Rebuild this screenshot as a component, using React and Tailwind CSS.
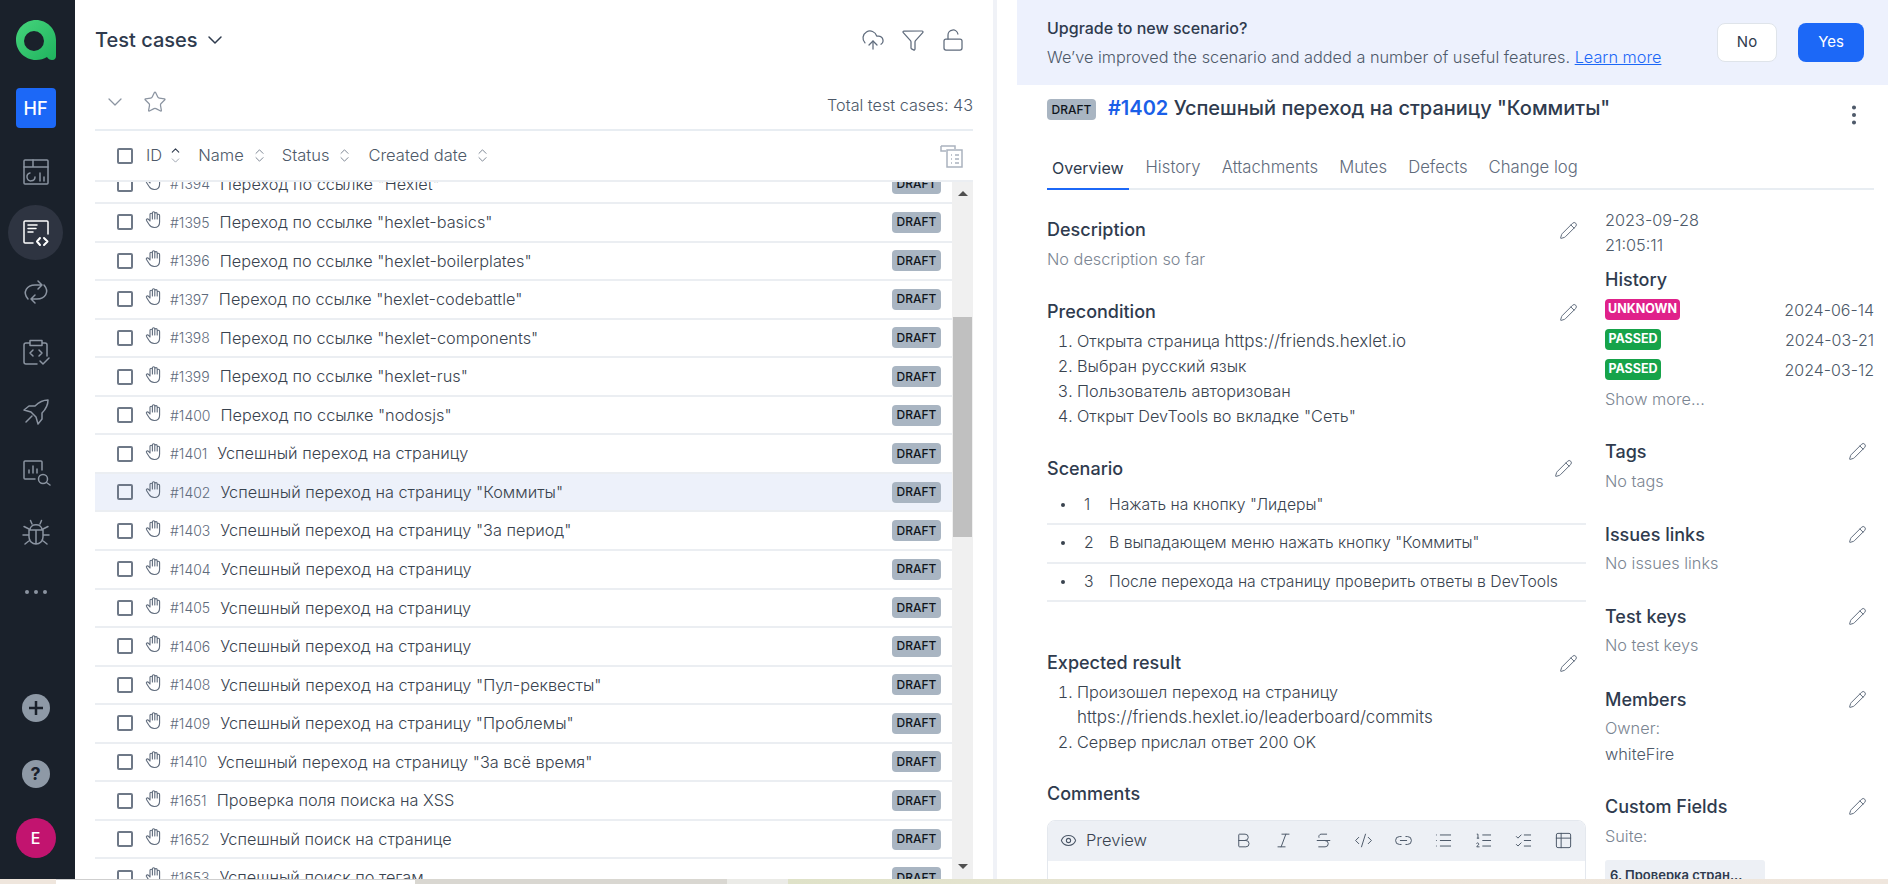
import {
  Bold,
  ChevronDown,
  ChevronsUpDown,
  ChevronUp,
  CloudUpload,
  CodeXml,
  Eye,
  Funnel,
  Italic,
  Link2,
  List,
  ListChecks,
  ListOrdered,
  LockOpen,
  MoreVertical,
  Pencil,
  Star,
  Strikethrough,
  Table2,
} from 'lucide-react';

const rows = [
  ['#1394', 'Переход по ссылке "Hexlet"'],
  ['#1395', 'Переход по ссылке "hexlet-basics"'],
  ['#1396', 'Переход по ссылке "hexlet-boilerplates"'],
  ['#1397', 'Переход по ссылке "hexlet-codebattle"'],
  ['#1398', 'Переход по ссылке "hexlet-components"'],
  ['#1399', 'Переход по ссылке "hexlet-rus"'],
  ['#1400', 'Переход по ссылке "nodosjs"'],
  ['#1401', 'Успешный переход на страницу'],
  ['#1402', 'Успешный переход на страницу "Коммиты"'],
  ['#1403', 'Успешный переход на страницу "За период"'],
  ['#1404', 'Успешный переход на страницу'],
  ['#1405', 'Успешный переход на страницу'],
  ['#1406', 'Успешный переход на страницу'],
  ['#1408', 'Успешный переход на страницу "Пул-реквесты"'],
  ['#1409', 'Успешный переход на страницу "Проблемы"'],
  ['#1410', 'Успешный переход на страницу "За всё время"'],
  ['#1651', 'Проверка поля поиска на XSS'],
  ['#1652', 'Успешный поиск на странице'],
  ['#1653', 'Успешный поиск по тегам'],
];

const navIcons = [
  <g key="a">
    <rect x="1" y="1" width="24" height="24" rx="1" />
    <path d="M1 8h24M10 1v7M7 14a4 4 0 1 0 5 4M17 14v8M21 18v4" />
  </g>,
  <g key="b">
    <path d="M25 15V3a1 1 0 0 0-1-1H2a1 1 0 0 0-1 1v20a1 1 0 0 0 1 1h8" />
    <path d="M5 6h9M5 9.500h8M5 13h5" />
    <path d="M17 19l-3 3.500 3 3.500M21 19l3.500 3.500-3.500 3.500" strokeWidth="2" />
  </g>,
  <path key="c" d="M5 20C-1 13 4 6 12 6h7M15 2l4 4-4 4M21 6c6 7 1 14-7 14H8M12 16l-4 4 4 4" />,
  <path key="d" d="M7 4H3a2 2 0 0 0-2 2v17a2 2 0 0 0 2 2h11M19 4h3a2 2 0 0 1 2 2v11M7 1.500h12v5H7zM10 11l-3 3 3 3M16 11l3 3-3 3M17 22l3 3 6-6" />,
  <path key="e" d="M25 1c-5 0-9 2-13 6H6l-5 4 7 2 5 5 2 7 4-5v-6c4-4 6-8 6-13zM3 23l6-6" />,
  <g key="f">
    <path d="M19 11V3a1 1 0 0 0-1-1H2a1 1 0 0 0-1 1v16a1 1 0 0 0 1 1h10M6 14v-3M10 14V7M14 14v-4" />
    <circle cx="20" cy="20" r="4.500" />
    <path d="M23.500 23.500 27 26" />
  </g>,
  <path key="g" d="M6 11h14v7a7 7 0 0 1-14 0zM13 11v14M7 11c0-7 12-7 12 0M9 5 7.500 1.500M17 5l1.500-3.500M6 10 1 7.500M20 10l5-2.500M6 16H0M20 16h6M7 21l-5 4M19 21l5 4" />,
];

function NavIcon({ children, active }) {
  return (
    <div className="h-[60px] flex items-center justify-center">
      <div className={`w-[55px] h-[55px] rounded-full flex items-center justify-center ${active ? 'bg-[#2e3441]' : ''}`}>
        <svg
          width="26"
          height="26"
          viewBox="0 0 26 26"
          fill="none"
          stroke={active ? '#ffffff' : '#8b94a1'}
          strokeWidth="1.500"
          strokeLinecap="round"
          strokeLinejoin="round"
          className="overflow-visible"
        >
          {children}
        </svg>
      </div>
    </div>
  );
}

function Sidebar() {
  return (
    <aside className="w-[75px] shrink-0 bg-[#1a212b] flex flex-col items-center pt-[20px] pb-[21px] pr-[4px]">
      <svg width="40" height="40" viewBox="0 0 40 40">
        <defs>
          <linearGradient id="logo" x1="0" y1="0" x2="1" y2="1">
            <stop offset="0" stopColor="#46d47c" />
            <stop offset="1" stopColor="#1fb35e" />
          </linearGradient>
        </defs>
        <path
          fillRule="evenodd"
          d="M20 0C9 0 0 9 0 20s9 20 20 20c4 0 8-1 11-3 1 2 3 3 5 3 3 0 4-2 4-4V20C40 9 31 0 20 0zm-2 11a10 10 0 1 1 0 20 10 10 0 0 1 0-20z"
          fill="url(#logo)"
        />
      </svg>
      <div className="mt-[28px] w-[40px] h-[40px] rounded-[4px] bg-[#1c68f7] text-white text-[18px] font-medium flex items-center justify-center">
        HF
      </div>
      <div className="mt-[14px] w-full">
        {navIcons.map((icon, i) => (
          <NavIcon key={i} active={i === 1}>{icon}</NavIcon>
        ))}
      </div>
      <div className="h-[60px] flex items-center gap-[5px]">
        <span className="w-[4px] h-[4px] rounded-full bg-[#8b94a1]" />
        <span className="w-[4px] h-[4px] rounded-full bg-[#8b94a1]" />
        <span className="w-[4px] h-[4px] rounded-full bg-[#8b94a1]" />
      </div>
      <div className="mt-auto flex flex-col items-center gap-[38px]">
        <div className="w-[28px] h-[28px] rounded-full bg-[#8e99a6] flex items-center justify-center">
          <svg width="18" height="18" viewBox="0 0 18 18" stroke="#1a212b" strokeWidth="2.500">
            <path d="M9 2v14M2 9h14" />
          </svg>
        </div>
        <div className="w-[28px] h-[28px] rounded-full bg-[#8e99a6] flex items-center justify-center text-[#1a212b] text-[18px] leading-none font-bold">
          ?
        </div>
        <div className="-mt-[8px] w-[40px] h-[40px] rounded-full bg-[#c2146f] flex items-center justify-center text-white text-[16px] font-medium">
          E
        </div>
      </div>
    </aside>
  );
}

function DraftBadge() {
  return (
    <span className="w-[49px] h-[21px] shrink-0 rounded-[4px] bg-[#a9b5c2] text-[#10151c] text-[12px] font-medium flex items-center justify-center">
      DRAFT
    </span>
  );
}

function Checkbox() {
  return <span className="w-[16px] h-[16px] shrink-0 border-2 border-[#6e7887] rounded-[2px]" />;
}

function HandIcon() {
  return (
    <svg
      width="17"
      height="18"
      viewBox="0 0 17 18"
      fill="none"
      stroke="#5f6b7c"
      strokeWidth="1.100"
      strokeLinecap="round"
      strokeLinejoin="round"
      className="ml-[12px] shrink-0 -translate-y-[2px]"
    >
      <path d="M5 10V3.500a1.200 1.200 0 0 1 2.400 0V8M7.400 8V2a1.200 1.200 0 0 1 2.400 0v6M9.800 8V2.800a1.200 1.200 0 0 1 2.400 0V8M12.200 8V4.500a1.200 1.200 0 0 1 2.400 0V11c0 3.500-2.300 5.500-5.300 5.500-2.700 0-4-1-5.200-3L1.500 9.500c-.6-1.200 1-2.200 2-1.200L5 10" />
    </svg>
  );
}

function SortLabel({ label, active, className }) {
  return (
    <div className={`flex items-center gap-[7px] ${className}`}>
      <span>{label}</span>
      {active ? (
        <span className="flex flex-col items-center">
          <ChevronUp size={13} strokeWidth={2} className="text-[#2f3b4e] -mb-[3px]" />
          <ChevronDown size={13} strokeWidth={1.5} className="text-[#8b94a1]" />
        </span>
      ) : (
        <ChevronsUpDown size={17} strokeWidth={1.25} className="text-[#6e7887]" />
      )}
    </div>
  );
}

function TestRow({ id, name }) {
  const selected = id === '#1402';
  return (
    <div
      className={`h-[38.550px] shrink-0 flex items-center pl-[22px] pr-[11px] border-b-2 border-[#ebeef2] ${selected ? 'bg-[#edf1fa]' : ''}`}
    >
      <Checkbox />
      <HandIcon />
      <span className="ml-[8px] text-[14px] font-light text-[#5f6b7c]">{id}</span>
      <span className="ml-[10px] text-[16.300px] font-light text-[#39434f] truncate">{name}</span>
      <span className="ml-auto">
        <DraftBadge />
      </span>
    </div>
  );
}

function ListPanel() {
  return (
    <section className="w-[918px] shrink-0 flex flex-col pl-[20px] pr-[20px] overflow-hidden">
      <div className="h-[80px] shrink-0 flex items-center">
        <h1 className="text-[20px] font-medium text-[#2f3b4e]">Test cases</h1>
        <ChevronDown size={24} strokeWidth={1.5} className="ml-[5px] text-[#2f3b4e]" />
        <div className="ml-auto mr-[8px] flex items-center gap-[16px] text-[#5f6b7c]">
          <CloudUpload size={24} strokeWidth={1.25} />
          <Funnel size={24} strokeWidth={1.25} />
          <LockOpen size={24} strokeWidth={1.25} />
        </div>
      </div>
      <div className="h-[51px] shrink-0 flex items-center border-b-2 border-[#e8edf2] pl-[8px] pb-[6px]">
        <ChevronDown size={24} strokeWidth={1.25} className="text-[#8b94a1]" />
        <Star size={24} strokeWidth={1.25} className="ml-[16px] text-[#8b94a1]" />
        <span className="ml-auto mt-[8px] text-[16.200px] font-light text-[#4d5969]">Total test cases: 43</span>
      </div>
      <div className="h-[51px] shrink-0 flex items-center pl-[22px] pr-[9px] border-b-2 border-[#ebeef2] text-[16.500px] font-light text-[#4d5969]">
        <Checkbox />
        <SortLabel label="ID" active className="ml-[13px]" />
        <SortLabel label="Name" className="ml-[16px]" />
        <SortLabel label="Status" className="ml-[14px]" />
        <SortLabel label="Created date" className="ml-[15px]" />
        <svg className="ml-auto" width="24" height="24" viewBox="0 0 24 24" fill="none" stroke="#aab3bf" strokeWidth="1.500">
          <path d="M1 2h14v3M1 2v5h5M7 6h15v17H7V6zM11 11h1M15 11h4M11 15h1M15 15h4M11 19h1M15 19h4" />
        </svg>
      </div>
      <div className="flex-1 min-h-0 flex">
        <div className="flex-1 min-w-0 overflow-hidden">
          <div className="-mt-[16.500px]">
            {rows.map(([id, name]) => (
              <TestRow key={id} id={id} name={name} />
            ))}
          </div>
        </div>
        <div className="w-[21px] shrink-0 bg-[#f0f0f0] flex flex-col items-center relative">
          <span className="mt-[9px] w-0 h-0 border-x-[5px] border-x-transparent border-b-[5px] border-b-[#505050]" />
          <span className="absolute top-[135px] left-[1px] right-[1px] h-[220px] bg-[#c0c0c0]" />
          <span className="mt-auto mb-[10px] w-0 h-0 border-x-[5px] border-x-transparent border-t-[5px] border-t-[#505050]" />
        </div>
      </div>
    </section>
  );
}

function Heading({ children, className = '' }) {
  return <h3 className={`h-[24px] leading-[24px] text-[18px] font-medium text-[#2f3b4e] ${className}`}>{children}</h3>;
}

function EditPencil({ className = '' }) {
  return <Pencil size={19} strokeWidth={1.25} className={`text-[#5f6b7c] ${className}`} />;
}

function SectionHead({ title, className = '', pencil = '' }) {
  return (
    <div className={`flex items-center justify-between ${className}`}>
      <Heading>{title}</Heading>
      <EditPencil className={pencil} />
    </div>
  );
}

function Muted({ children, className = '' }) {
  return <p className={`h-[24px] leading-[22px] text-[16.300px] font-light text-[#7b8592] ${className}`}>{children}</p>;
}

function ScenarioRow({ n, text }) {
  return (
    <div className="h-[38.500px] flex items-center pl-[14px] border-b-2 border-[#ebeef2] text-[15.750px] font-light text-[#39434f]">
      <span className="w-[4px] h-[4px] rounded-full bg-[#39434f]" />
      <span className="ml-[19px] w-[25px]">{n}</span>
      <span>{text}</span>
    </div>
  );
}

function StatusRow({ label, color, width, date }) {
  return (
    <div className="h-[30px] flex items-center justify-between">
      <span
        className={`h-[21px] rounded-[4px] text-white text-[12.500px] font-bold flex items-center justify-center ${color} ${width}`}
      >
        {label}
      </span>
      <span className="text-[16px] font-light text-[#4d5969]">{date}</span>
    </div>
  );
}

function MainColumn() {
  const tools = [Bold, Italic, Strikethrough, CodeXml, Link2, List, ListOrdered, ListChecks, Table2];
  return (
    <div className="w-[539px] shrink-0">
      <SectionHead title="Description" className="mt-[28px]" pencil="mr-[8px]" />
      <Muted className="mt-[6px]">No description so far</Muted>

      <SectionHead title="Precondition" className="mt-[28px]" pencil="mr-[8px]" />
      <ol className="mt-[5px] pl-[30px] list-decimal text-[16.300px] leading-[25px] font-light text-[#39434f]">
        <li>Открыта страница <span className="text-[17px]">https://friends.hexlet.io</span></li>
        <li>Выбран русский язык</li>
        <li>Пользователь авторизован</li>
        <li>Открыт DevTools во вкладке "Сеть"</li>
      </ol>

      <SectionHead title="Scenario" className="mt-[27.500px]" pencil="mr-[13px]" />
      <div className="mt-[6px]">
        <ScenarioRow n="1" text={'Нажать на кнопку "Лидеры"'} />
        <ScenarioRow n="2" text={'В выпадающем меню нажать кнопку "Коммиты"'} />
        <ScenarioRow n="3" text="После перехода на страницу проверить ответы в DevTools" />
      </div>

      <SectionHead title="Expected result" className="mt-[49px]" pencil="mr-[8px]" />
      <ol className="mt-[4.500px] pl-[30px] list-decimal text-[16.300px] leading-[25px] font-light text-[#39434f]">
        <li>
          Произошел переход на страницу
          <br />
          <span className="text-[17px]">https://friends.hexlet.io/leaderboard/commits</span>
        </li>
        <li>Сервер прислал ответ 200 OK</li>
      </ol>

      <Heading className="mt-[27.500px]">Comments</Heading>
      <div className="mt-[14px] h-[100px] border border-[#e4e8ee] rounded-t-[8px] overflow-hidden">
        <div className="h-[40px] bg-[#edf0f5] flex items-center pl-[12px] pr-[12px] pb-[2px]">
          <Eye size={17} strokeWidth={1.5} className="text-[#4d5969]" />
          <span className="ml-[9px] text-[16.500px] font-light text-[#39434f]">Preview</span>
          <div className="ml-auto flex items-center gap-[21px] text-[#4d5969]">
            {tools.map((Tool, i) => (
              <Tool key={i} size={19} strokeWidth={1.25} />
            ))}
          </div>
        </div>
      </div>
    </div>
  );
}

function SideColumn() {
  return (
    <div className="w-[269px] shrink-0 text-[16.300px] font-light text-[#4d5969]">
      <div className="mt-[18px] leading-[25px]">
        2023-09-28
        <br />
        21:05:11
      </div>
      <Heading className="mt-[9.500px]">History</Heading>
      <div className="mt-[3px]">
        <StatusRow label="UNKNOWN" color="bg-[#e0218a]" width="w-[75px]" date="2024-06-14" />
        <StatusRow label="PASSED" color="bg-[#16a34a]" width="w-[56px]" date="2024-03-21" />
        <StatusRow label="PASSED" color="bg-[#16a34a]" width="w-[56px]" date="2024-03-12" />
        <div className="h-[30px] leading-[28px] text-[#7b8592]">Show more...</div>
      </div>

      <SectionHead title="Tags" className="mt-[25px]" pencil="mr-[7px]" />
      <Muted className="mt-[6px]">No tags</Muted>
      <SectionHead title="Issues links" className="mt-[29px]" pencil="mr-[7px]" />
      <Muted className="mt-[5px]">No issues links</Muted>
      <SectionHead title="Test keys" className="mt-[29px]" pencil="mr-[7px]" />
      <Muted className="mt-[5px]">No test keys</Muted>
      <SectionHead title="Members" className="mt-[30px]" pencil="mr-[7px]" />
      <Muted className="mt-[5px]">Owner:</Muted>
      <p className="mt-[1px] h-[24px] leading-[24px] text-[#4d5969]">whiteFire</p>
      <SectionHead title="Custom Fields" className="mt-[29px]" pencil="mr-[7px]" />
      <Muted className="mt-[6px]">Suite:</Muted>
      <div className="mt-[11px] w-[160px] h-[40px] rounded-[3px] bg-[#edf0f5] pl-[5px] pt-[6px] text-[13px] font-semibold text-[#2f3b4e] truncate">
        6. Проверка стран...
      </div>
    </div>
  );
}

function DetailPanel() {
  const tabs = ['History', 'Attachments', 'Mutes', 'Defects', 'Change log'];
  return (
    <section className="flex-1 min-w-0 pl-[20px] overflow-hidden">
      <div className="h-[85px] bg-[#edf1fd] flex items-center pl-[30px] pr-[24px]">
        <div>
          <p className="text-[16px] leading-[24px] font-medium text-[#2f3b4e]">Upgrade to new scenario?</p>
          <p className="mt-[5px] text-[16.300px] leading-[24px] font-light text-[#4d5969]">
            We’ve improved the scenario and added a number of useful features.{' '}
            <a href="#" className="text-[#1c68f7] underline">Learn more</a>
          </p>
        </div>
        <button className="ml-auto w-[60px] h-[39px] rounded-[8px] bg-white border border-[#dfe4ea] text-[15px] text-[#2f3b4e]">
          No
        </button>
        <button className="ml-[21px] w-[66px] h-[39px] rounded-[8px] bg-[#1c68f7] text-[15px] text-white">
          Yes
        </button>
      </div>

      <div className="pl-[30px] pr-[14px]">
        <div className="h-[62px] flex items-start relative">
          <span className="mt-[14px]">
            <DraftBadge />
          </span>
          <h2 className="ml-[12px] mt-[8px] text-[20px] leading-[30px] font-medium text-[#2f3b4e]">
            <span className="text-[#1a5fe8] font-semibold">#1402</span> Успешный переход на страницу "Коммиты"
          </h2>
          <MoreVertical size={26} strokeWidth={1.75} className="absolute right-[7px] top-[17px] text-[#4d5969]" />
        </div>

        <div className="h-[43px] flex items-center gap-[21px] border-b-2 border-[#e8edf2] text-[16.700px] font-light text-[#5f6b7c]">
          <span className="relative h-full -mr-[4px] flex items-center px-[5px] text-[16px] font-normal text-[#2f3b4e]">
            Overview
            <span className="absolute left-0 right-0 -bottom-[2px] h-[2px] bg-[#1c68f7]" />
          </span>
          {tabs.map((t) => (
            <span key={t}>{t}</span>
          ))}
        </div>

        <div className="flex justify-between">
          <MainColumn />
          <SideColumn />
        </div>
      </div>
    </section>
  );
}

export default function App() {
  return (
    <div className="w-[1888px] h-[884px] overflow-hidden bg-white flex flex-col font-['Inter',sans-serif]">
      <div className="h-[879px] flex overflow-hidden">
        <Sidebar />
        <ListPanel />
        <div className="w-[4px] shrink-0 bg-[#f0f2f7]" />
        <DetailPanel />
      </div>
      <div className="h-[5px] shrink-0 flex">
        <div className="w-[56px] bg-[#efe6dd]" />
        <div className="w-[359px] bg-white border-t border-[#cfcfcf]" />
        <div className="w-[312px] bg-[#d9d7d1]" />
        <div className="w-[61px] bg-[#ebebe7]" />
        <div className="flex-1 bg-gradient-to-r from-[#dfe2c8] via-[#ece5da] to-[#efe6dd]" />
      </div>
    </div>
  );
}
